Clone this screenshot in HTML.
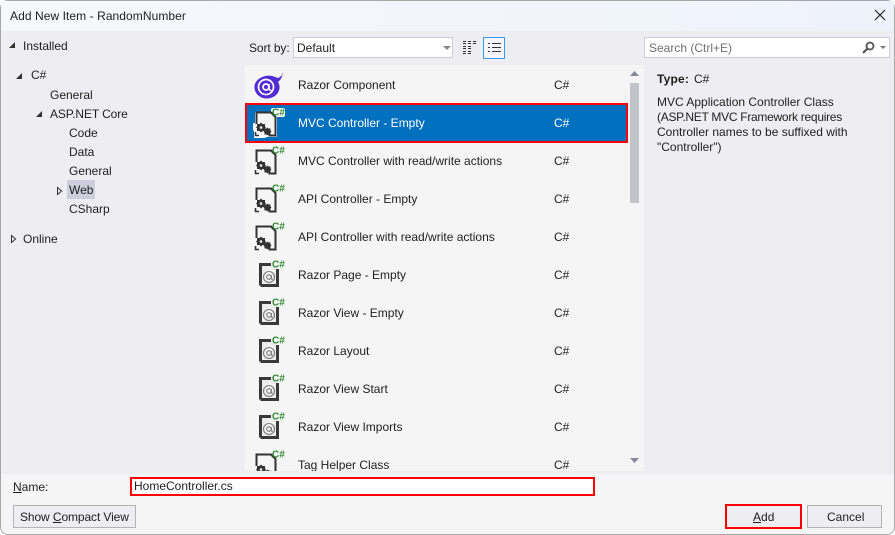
<!DOCTYPE html>
<html><head><meta charset="utf-8"><style>
*{box-sizing:border-box}
html,body{margin:0;padding:0;width:895px;height:535px;overflow:hidden;background:#fff;font-family:"Liberation Sans",sans-serif;font-size:12px;color:#1e1e1e}
#d{position:absolute;left:0;top:0;width:895px;height:535px;background:#eeeef2;border:1px solid #a8a8a8;border-radius:8px;overflow:hidden}
.a{position:absolute;white-space:nowrap;line-height:16px}
.s{position:absolute}
svg{position:absolute;overflow:visible}
.n{left:298px}
.c{left:554px}
svg text{font-family:"Liberation Sans",sans-serif;font-size:10px;font-weight:700;fill:#2f8a2f}
</style></head><body>
<svg width="0" height="0" style="position:absolute"><defs>
<g id="ctl">
<path d="M4.500 18V6.500H19L23.500 11V29.500H16.500" fill="none" stroke="#333" stroke-width="2"/>
<path d="M9 16.500l1.500 1.500h2.500v2.500l1 1-1 1v2.500h-2.500L9 26.500l-1.500-1.500H5v-2.500l-1-1 1-1V18h2.500z" fill="#333"/>
<circle cx="9" cy="21.500" r="1.300" fill="#f5f5f5"/>
<path d="M15.500 21.500l1 1h2v2l1 1-1 1v2h-2l-1 1-1-1h-2v-2l-1-1 1-1v-2h2z" fill="#333"/>
<path d="M3.500 26v3.500H7" fill="none" stroke="#333" stroke-width="1.600"/>
<text x="20" y="9.500">C#</text>
</g>
<g id="rz">
<path d="M2.500 25.500V4.500H13M19.500 9V25.500H2.500" fill="#ececec" stroke="#3a3a3a" stroke-width="3"/>
<path d="M13 6h5v4h-5z" fill="#ececec"/>
<circle cx="11" cy="17" r="5.500" fill="none" stroke="#7a7a7a" stroke-width="1.100"/>
<circle cx="11" cy="17" r="2.300" fill="none" stroke="#7a7a7a" stroke-width="1.100"/>
<path d="M13.300 15v3q0 1.500 1.500 1.300" fill="none" stroke="#7a7a7a" stroke-width="1.100"/>
<text x="14" y="7.500">C#</text>
</g>
</defs></svg>
<div id="d"></div>
<div class="s" style="left:1px;top:1px;width:893px;height:30px;background:linear-gradient(90deg,#f6f8fb,#eef2fb)"></div>
<div class="a" style="left:10px;top:8px;letter-spacing:.07px">Add New Item - RandomNumber</div>
<svg style="left:874px;top:9px" width="12" height="12"><path d="M1 1L11 11M11 1L1 11" stroke="#222" stroke-width="1.200"/></svg>

<svg style="left:8px;top:41px" width="8" height="8"><path d="M7 1V7H1Z" fill="#333"/></svg>
<div class="a" style="left:23px;top:38px">Installed</div>
<svg style="left:15px;top:72px" width="8" height="8"><path d="M7 1V7H1Z" fill="#333"/></svg>
<div class="a" style="left:31px;top:67px">C#</div>
<div class="a" style="left:50px;top:87px">General</div>
<svg style="left:35px;top:110px" width="8" height="8"><path d="M7 1V7H1Z" fill="#333"/></svg>
<div class="a" style="left:50px;top:106px;letter-spacing:-.1px">ASP.NET Core</div>
<div class="a" style="left:69px;top:125px">Code</div>
<div class="a" style="left:69px;top:144px">Data</div>
<div class="a" style="left:69px;top:163px">General</div>
<svg style="left:57px;top:187px" width="6" height="8"><path d="M.5 .5L4.500 4 .5 7.500Z" fill="#eeeef2" stroke="#333"/></svg>
<div class="s" style="left:67px;top:180px;width:28px;height:19px;background:#cccedb"></div>
<div class="a" style="left:69px;top:182px">Web</div>
<div class="a" style="left:69px;top:201px">CSharp</div>
<svg style="left:11px;top:235px" width="6" height="8"><path d="M.5 .5L4.500 4 .5 7.500Z" fill="#eeeef2" stroke="#333"/></svg>
<div class="a" style="left:23px;top:231px">Online</div>

<div class="a" style="left:249px;top:40px;letter-spacing:-.1px">Sort by:</div>
<div class="s" style="left:293px;top:37px;width:160px;height:21px;background:#fff;border:1px solid #cccedb"></div>
<div class="a" style="left:297px;top:40px">Default</div>
<svg style="left:443px;top:46px" width="8" height="5"><path d="M0 0H8L4 4Z" fill="#888"/></svg>
<svg style="left:463px;top:41px" width="14" height="14"><path d="M0 0h3v1H0zM5 0h3v1H5zM10 0h3v1h-3zM0 2h3v1H0zM5 2h3v1H5zM10 2h3v1h-3zM0 5h3v1H0zM5 5h3v1H5zM0 7h3v1H0zM5 7h3v1H5zM0 10h3v1H0zM5 10h3v1H5zM0 12h3v1H0zM5 12h3v1H5z" fill="#333"/></svg>
<div class="s" style="left:483px;top:37px;width:22px;height:22px;border:1px solid #3399ff;background:#f5f5f8"></div>
<svg style="left:488px;top:42px" width="13" height="12"><path d="M0 1h2v1H0zM4 1h9v1H4zM0 5h2v1H0zM4 5h9v1H4zM0 9h2v1H0zM4 9h9v1H4z" fill="#333"/></svg>

<div class="s" style="left:245px;top:65px;width:399px;height:406px;background:#f5f5f5;overflow:hidden">
<div class="s" style="left:385px;top:18px;width:9px;height:120px;background:#c2c3c9"></div>
<svg style="left:385px;top:6px" width="9" height="5"><path d="M0 5H9L4.500 0Z" fill="#868999"/></svg>
<svg style="left:385px;top:393px" width="9" height="5"><path d="M0 0H9L4.500 5Z" fill="#868999"/></svg>
<svg style="left:7px;top:383px" width="34" height="34"><use href="#ctl"/></svg>
<div class="a" style="left:53px;top:392px">Tag Helper Class</div>
<div class="a" style="left:309px;top:392px">C#</div>
</div>

<svg style="left:254px;top:72px" width="30" height="27" viewBox="0 0 30 27">
<path d="M29 0q-1 5-5.500 6C19 3.500 14 3 9.500 4.500 3 7 0 11 .5 16c.5 6 6 10.500 12 10.500 7 0 12-4 13-10 .3-3-.5-5-1.500-6.500 3-2 4.500-6 5-10z" fill="#512bd4"/>
<circle cx="12" cy="15" r="7.500" fill="none" stroke="#fff" stroke-width="1.700"/>
<circle cx="12" cy="15" r="3" fill="none" stroke="#fff" stroke-width="1.700"/>
<path d="M15 12v4q0 2.500 2.500 2.500" fill="none" stroke="#fff" stroke-width="1.500"/>
</svg>
<div class="a n" style="top:77px">Razor Component</div><div class="a c" style="top:77px">C#</div>

<div class="s" style="left:245px;top:103px;width:383px;height:40px;background:#0070bf;border:2px solid #f00"></div>
<svg style="left:252px;top:106px" width="34" height="34">
<path d="M4 7H20L24 11V30H13V31H3V24H2V18H4Z" fill="#f5f5f5" stroke="#fff" stroke-width="2" stroke-linejoin="round"/>
<rect x="19" y="2" width="14" height="9" rx="2" fill="#fff"/>
<use href="#ctl"/>
</svg>
<div class="a n" style="top:115px;color:#fff">MVC Controller - Empty</div><div class="a c" style="top:115px;color:#fff">C#</div>

<svg style="left:252px;top:144px" width="34" height="34"><use href="#ctl"/></svg>
<div class="a n" style="top:153px">MVC Controller with read/write actions</div><div class="a c" style="top:153px">C#</div>
<svg style="left:252px;top:182px" width="34" height="34"><use href="#ctl"/></svg>
<div class="a n" style="top:191px">API Controller - Empty</div><div class="a c" style="top:191px">C#</div>
<svg style="left:252px;top:220px" width="34" height="34"><use href="#ctl"/></svg>
<div class="a n" style="top:229px">API Controller with read/write actions</div><div class="a c" style="top:229px">C#</div>

<svg style="left:258px;top:260px" width="30" height="30"><use href="#rz"/></svg>
<div class="a n" style="top:267px">Razor Page - Empty</div><div class="a c" style="top:267px">C#</div>
<svg style="left:258px;top:298px" width="30" height="30"><use href="#rz"/></svg>
<div class="a n" style="top:305px">Razor View - Empty</div><div class="a c" style="top:305px">C#</div>
<svg style="left:258px;top:336px" width="30" height="30"><use href="#rz"/></svg>
<div class="a n" style="top:343px">Razor Layout</div><div class="a c" style="top:343px">C#</div>
<svg style="left:258px;top:374px" width="30" height="30"><use href="#rz"/></svg>
<div class="a n" style="top:381px">Razor View Start</div><div class="a c" style="top:381px">C#</div>
<svg style="left:258px;top:412px" width="30" height="30"><use href="#rz"/></svg>
<div class="a n" style="top:419px">Razor View Imports</div><div class="a c" style="top:419px">C#</div>

<div class="s" style="left:644px;top:37px;width:246px;height:21px;background:#fff;border:1px solid #cccedb"></div>
<div class="a" style="left:649px;top:40px;color:#717171">Search (Ctrl+E)</div>
<svg style="left:862px;top:41px" width="22" height="13"><circle cx="8" cy="5" r="3.500" fill="none" stroke="#555" stroke-width="1.800"/><path d="M5.500 7.500L1 12" stroke="#555" stroke-width="2.200"/><path d="M18 5h6l-3 3z" fill="#777"/></svg>
<div class="a" style="left:657px;top:71px;font-weight:700;letter-spacing:.2px">Type:</div>
<div class="a" style="left:694px;top:71px">C#</div>
<div class="a" style="left:657px;top:95px;line-height:15px">MVC Application Controller Class<br><span style="letter-spacing:-.28px">(ASP.NET MVC Framework requires</span><br>Controller names to be suffixed with<br>"Controller")</div>

<div class="s" style="left:1px;top:474px;width:893px;height:60px;background:#f5f5f5;border-radius:0 0 7px 7px"></div>
<div class="a" style="left:13px;top:479px"><u>N</u>ame:</div>
<div class="s" style="left:130px;top:477px;width:465px;height:19px;background:#fff;border:2px solid #f00"></div>
<div class="a" style="left:134px;top:478px">HomeController.cs</div>
<div class="s" style="left:13px;top:505px;width:123px;height:23px;background:#eeeef2;border:1px solid #b4b4b4"></div>
<div class="a" style="left:20px;top:509px;letter-spacing:-.1px">Show <u>C</u>ompact View</div>
<div class="s" style="left:725px;top:504px;width:77px;height:25px;background:#eeeef2;border:2px solid #f00"></div>
<div class="a" style="left:753px;top:509px"><u>A</u>dd</div>
<div class="s" style="left:807px;top:505px;width:75px;height:23px;background:#eeeef2;border:1px solid #b4b4b4"></div>
<div class="a" style="left:827px;top:509px">Cancel</div>
</body></html>
